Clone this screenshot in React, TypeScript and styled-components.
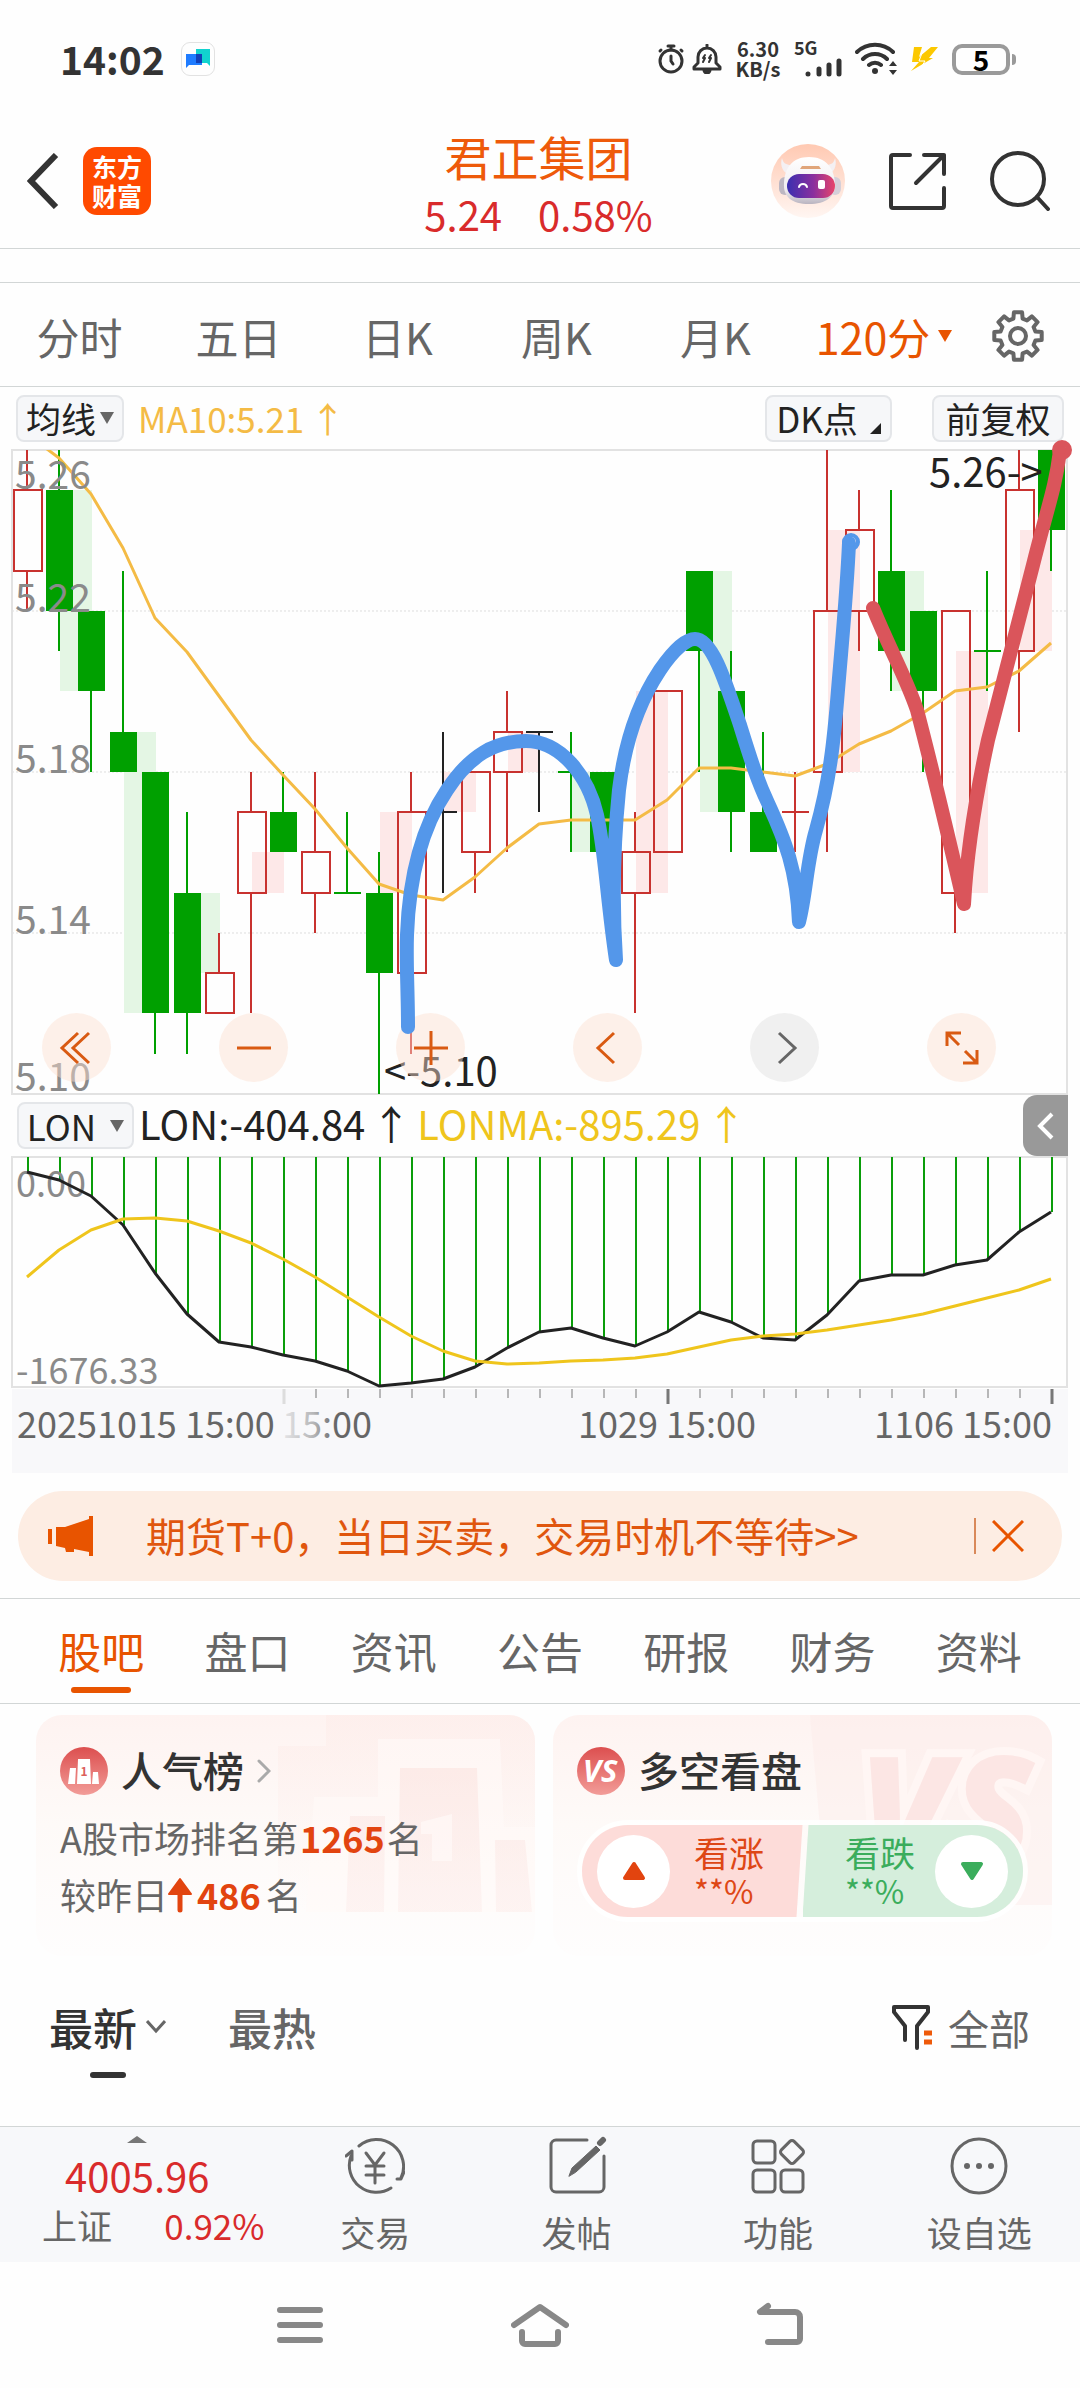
import React from "react";
import styled, { createGlobalStyle, css } from "styled-components";

const FONT = '"Noto Sans CJK SC", "Noto Sans", sans-serif';

const GlobalStyle = createGlobalStyle`
  * { box-sizing: border-box; }
  body { margin: 0; background: #fefefe; font-family: ${FONT}; color: #333; }
  button { margin: 0; padding: 0; border: 0; background: none; color: inherit; font: inherit; cursor: pointer; }
  svg { display: block; }
`;

const C = {
  orange: "#e85400",
  up: "#d92b2b",
  gray: "#666",
  line: "#d2d6d6",
  green: "#00a000",
};

/* ---------- data ---------- */

type Tone = "r" | "g" | "k";
/* open, close, high, low, tone */
type Candle = [number, number, number, number, Tone];

const candles: Candle[] = [
  [5.23, 5.25, 5.27, 5.22, "r"],
  [5.25, 5.22, 5.27, 5.21, "g"],
  [5.22, 5.2, 5.22, 5.18, "g"],
  [5.19, 5.18, 5.23, 5.18, "g"],
  [5.18, 5.12, 5.18, 5.11, "g"],
  [5.15, 5.12, 5.17, 5.11, "g"],
  [5.12, 5.13, 5.14, 5.12, "r"],
  [5.15, 5.17, 5.18, 5.12, "r"],
  [5.17, 5.16, 5.18, 5.16, "g"],
  [5.15, 5.16, 5.18, 5.14, "r"],
  [5.15, 5.15, 5.17, 5.15, "g"],
  [5.15, 5.13, 5.16, 5.1, "g"],
  [5.13, 5.17, 5.18, 5.11, "r"],
  [5.17, 5.17, 5.19, 5.15, "k"],
  [5.16, 5.18, 5.18, 5.15, "r"],
  [5.18, 5.19, 5.2, 5.16, "r"],
  [5.19, 5.19, 5.19, 5.17, "k"],
  [5.18, 5.18, 5.19, 5.16, "g"],
  [5.18, 5.16, 5.18, 5.16, "g"],
  [5.15, 5.16, 5.17, 5.12, "r"],
  [5.16, 5.2, 5.2, 5.16, "r"],
  [5.23, 5.21, 5.23, 5.18, "g"],
  [5.2, 5.17, 5.21, 5.16, "g"],
  [5.17, 5.16, 5.19, 5.16, "g"],
  [5.17, 5.17, 5.18, 5.16, "r"],
  [5.18, 5.22, 5.27, 5.16, "r"],
  [5.22, 5.24, 5.25, 5.21, "r"],
  [5.23, 5.21, 5.25, 5.2, "g"],
  [5.22, 5.2, 5.22, 5.18, "g"],
  [5.15, 5.22, 5.22, 5.14, "r"],
  [5.21, 5.21, 5.23, 5.2, "g"],
  [5.21, 5.25, 5.27, 5.19, "r"],
  [5.26, 5.24, 5.26, 5.23, "g"],
];

/* start index, top price, bottom price, tone */
const shades: [number, number, number, Tone][] = [
  [1, 5.25, 5.2, "g"],
  [3, 5.19, 5.12, "g"],
  [5, 5.15, 5.13, "g"],
  [7, 5.16, 5.15, "r"],
  [11, 5.17, 5.15, "r"],
  [13, 5.18, 5.17, "r"],
  [15, 5.19, 5.18, "r"],
  [17, 5.18, 5.16, "g"],
  [19, 5.2, 5.15, "r"],
  [21, 5.23, 5.17, "g"],
  [25, 5.24, 5.18, "r"],
  [27, 5.23, 5.2, "g"],
  [29, 5.21, 5.15, "r"],
  [31, 5.24, 5.21, "r"],
];

const ma10 = [
  -15, 9, 45, 99, 169, 203, 247, 291, 326, 360, 399, 435, 446, 451, 428, 399,
  375, 371, 371, 371, 351, 319, 319, 323, 327, 315, 295, 282, 264, 242, 238,
  222, 194,
];

const lon = [
  16, 24, 40, 69, 117, 158, 186, 191, 199, 205, 215, 230, 227, 223, 211, 192,
  176, 172, 182, 190, 176, 156, 166, 182, 184, 159, 125, 119, 119, 109, 104,
  76, 56,
];
const lonma = [
  121, 94, 74, 63, 62, 65, 75, 87, 103, 121, 141, 161, 180, 195, 205, 208,
  207, 205, 204, 202, 198, 191, 184, 180, 178, 174, 169, 164, 158, 150, 142,
  134, 123,
];

const px = (i: number) => 15 + 32 * i;
const py = (p: number) => Math.round(1 + (5.26 - p) * 4025);
const points = (ys: number[]) => ys.map((y, i) => `${px(i)},${y}`).join(" ");

const toneColor = { r: "#c8322f", g: C.green, k: "#222" };

/* ---------- status bar ---------- */

const Page = styled.div`
  width: 100%;
  display: flex;
  flex-direction: column;
  background: #fefefe;
`;

const Status = styled.div`
  height: 118px;
  padding: 0 64px 0 60px;
  display: flex;
  align-items: center;
  justify-content: space-between;
`;
const Group = styled.div<{ $gap: number }>`
  display: flex;
  align-items: center;
  gap: ${(p) => p.$gap}px;
`;
const Clock = styled.span`
  font-size: 39px;
  line-height: 44px;
  padding-bottom: 3px;
  font-weight: 700;
`;
const Speed = styled.span`
  width: 46px;
  font-size: 20px;
  line-height: 20px;
  font-weight: 700;
  text-align: center;
`;
const Signal = styled.svg`
  overflow: visible;
`;
const AppBadge = styled.span`
  width: 34px;
  height: 34px;
  border: 1px solid #e2e2e2;
  border-radius: 9px;
  display: grid;
  place-items: center;
`;
const Battery = styled.span`
  position: relative;
  width: 58px;
  height: 31px;
  margin-right: 6px;
  border: 4px solid #9a9a9a;
  border-radius: 10px;
  font-size: 28px;
  line-height: 22px;
  font-weight: 700;
  text-align: center;
  color: #000;
  &::after {
    content: "";
    position: absolute;
    right: -10px;
    top: 6px;
    width: 4px;
    height: 11px;
    border-radius: 0 4px 4px 0;
    background: #9a9a9a;
  }
`;

function StatusBar() {
  return (
    <Status>
      <Group $gap={16}>
        <Clock>14:02</Clock>
        <AppBadge>
          <svg width="26" height="22" viewBox="0 0 26 22">
            <path d="M11 1h14v17l-3-3H11z" fill="#11d3cf" />
            <path d="M1 6h16v11H4l-3 3z" fill="#1f7cff" />
            <path d="M11 6h6v9h-6z" fill="#1140b8" />
          </svg>
        </AppBadge>
      </Group>
      <Group $gap={13}>
        <Group $gap={7}>
          <svg width="28" height="30" viewBox="0 0 28 30" fill="none" stroke="#333" strokeWidth="3" strokeLinecap="round">
            <circle cx="14" cy="17" r="11" />
            <path d="M11 2h6M14 2v4M4 6l-1 1M24 6l1 1M14 12v5l2 3" />
          </svg>
          <svg width="30" height="30" viewBox="0 0 30 30" fill="none" stroke="#333" strokeWidth="3" strokeLinecap="round" strokeLinejoin="round">
            <path d="M15 1v2M6 13a9 9 0 0 1 18 0v6l4 4v2H2v-2l4-4z" />
            <path d="M12 26a3 3 0 0 0 6 0z" fill="#333" />
            <path d="M13 11l-2 3h2l-2 4M19 11l-2 3h2l-2 4" strokeWidth="2" />
          </svg>
        </Group>
        <Speed>6.30 KB/s</Speed>
        <Signal width="48" height="36" viewBox="0 0 48 36">
          <text x="0" y="14" fontSize="18" fontWeight="700" fill="#333">5G</text>
          <path d="M14 33v0M25 33v-5M35 33v-9M45 33v-13" stroke="#333" strokeWidth="5" strokeLinecap="round" />
        </Signal>
        <svg width="42" height="34" viewBox="0 0 42 34" fill="none" stroke="#333" strokeWidth="4" strokeLinecap="round">
          <path d="M2 10a26 26 0 0 1 36 0M8 17a17 17 0 0 1 24 0M14 23a9 9 0 0 1 12 0" />
          <circle cx="20" cy="29" r="3" fill="#333" stroke="none" />
          <path d="M38 19l4 5h-8zM38 33l4-5h-8z" fill="#333" stroke="none" />
        </svg>
        <svg width="29" height="26" viewBox="0 0 29 26">
          <path d="M4 1h8l-3 10 12-10h7l-9 11h4L1 25l8-9H2z" fill="#fcc800" />
          <path d="M14 2l-5 13h6l-3 5" fill="none" stroke="#fff" strokeWidth="1" />
        </svg>
        <Battery>5</Battery>
      </Group>
    </Status>
  );
}

/* ---------- header ---------- */

const Head = styled.header`
  height: 131px;
  padding: 0 30px 4px 27px;
  display: grid;
  grid-template-columns: 1fr auto 1fr;
  align-items: center;
  border-bottom: 1px solid ${C.line};
`;
const HeadRight = styled.div`
  display: flex;
  justify-content: flex-end;
  align-items: center;
  gap: 42px;
`;
const Logo = styled.button`
  width: 68px;
  height: 68px;
  border-radius: 14px;
  background: #ff4a00;
  color: #fff;
  font-size: 25px;
  line-height: 29px;
  font-weight: 700;
`;
const TitleBox = styled.div`
  padding-top: 6px;
  text-align: center;
`;
const Title = styled.h1`
  margin: 0;
  font-size: 47px;
  line-height: 60px;
  font-weight: 400;
  color: #ee5a0a;
`;
const Quote = styled.div`
  display: flex;
  justify-content: center;
  gap: 36px;
  font-size: 40px;
  line-height: 56px;
  color: ${C.up};
`;
const Strip = styled.div`
  height: 34px;
  border-bottom: 1px solid ${C.line};
`;

function Header() {
  return (
    <Head>
      <Group $gap={24}>
        <button aria-label="返回">
          <svg width="32" height="56" viewBox="0 0 32 56" fill="none" stroke="#333" strokeWidth="6">
            <path d="M29 2L4 28l25 26" />
          </svg>
        </button>
        <Logo>东方<br />财富</Logo>
      </Group>
      <TitleBox>
        <Title>君正集团</Title>
        <Quote>
          <span>5.24</span>
          <span>0.58%</span>
        </Quote>
      </TitleBox>
      <HeadRight>
        <button aria-label="助手">
          <svg width="75" height="75" viewBox="0 0 75 75">
            <defs>
              <linearGradient id="halo" x1="0" y1="0" x2="0" y2="1">
                <stop offset="0" stopColor="#ffc9b2" />
                <stop offset="1" stopColor="#fff6f2" />
              </linearGradient>
              <linearGradient id="visor" x1="0" y1="0" x2="1" y2="0">
                <stop offset="0" stopColor="#3a2fb0" />
                <stop offset="0.55" stopColor="#8a2f9e" />
                <stop offset="1" stopColor="#e8456a" />
              </linearGradient>
              <linearGradient id="shell" x1="0" y1="0" x2="0" y2="1">
                <stop offset="0" stopColor="#fff" />
                <stop offset="0.7" stopColor="#f0edf0" />
                <stop offset="1" stopColor="#b9b4c0" />
              </linearGradient>
            </defs>
            <circle cx="37" cy="37" r="37" fill="url(#halo)" />
            <path d="M11 14c1 5 4 7 9 7l-5 8c-4-3-6-9-4-15zM64 14c-1 5-4 7-9 7l5 8c4-3 6-9 4-15z" fill="#f4f0f3" />
            <rect x="8" y="33" width="12" height="18" rx="6" fill="#bdb7c2" />
            <rect x="58" y="33" width="12" height="18" rx="6" fill="#d5cfd8" />
            <path d="M38 13c17 0 25 11 26 26 1 14-9 21-26 21s-26-7-25-21c1-15 8-26 25-26z" fill="url(#shell)" />
            <rect x="16" y="30" width="48" height="24" rx="12" fill="url(#visor)" />
            <path d="M28 43c1-4 7-4 8 0" fill="none" stroke="#fff" strokeWidth="2" strokeLinecap="round" />
            <rect x="47" y="36" width="7" height="9" rx="2" fill="#fff" />
            <path d="M31 22h17l2 3H29z" fill="#e0a57a" />
          </svg>
        </button>
        <button aria-label="分享">
          <svg width="60" height="60" viewBox="0 0 60 60" fill="none" stroke="#333" strokeWidth="4" strokeLinecap="round" strokeLinejoin="round">
            <path d="M22 4H5a2 2 0 0 0-2 2v49a2 2 0 0 0 2 2h49a2 2 0 0 0 2-2V37" />
            <path d="M36 4h20v19M56 4L28 32" />
          </svg>
        </button>
        <button aria-label="搜索">
          <svg width="60" height="60" viewBox="0 0 60 60" fill="none" stroke="#333" strokeWidth="4" strokeLinecap="round">
            <circle cx="28" cy="28" r="26" />
            <path d="M47 46l11 12" />
          </svg>
        </button>
      </HeadRight>
    </Head>
  );
}

/* ---------- period tabs ---------- */

const Periods = styled.nav`
  height: 104px;
  padding: 2px 17px 0 0;
  display: grid;
  grid-template-columns: repeat(5, 159fr) 178fr 90fr;
  align-items: center;
  border-bottom: 1px solid ${C.line};
`;
const Period = styled.button<{ $on?: boolean }>`
  display: flex;
  align-items: center;
  justify-content: center;
  gap: 8px;
  font-size: 43px;
  line-height: 60px;
  color: ${(p) => (p.$on ? C.orange : C.gray)};
`;

function gearPath() {
  const pts: string[] = [];
  for (let k = 0; k < 8; k++) {
    const a = (k * Math.PI) / 4 - Math.PI / 2;
    [[-0.26, 18], [-0.17, 24], [0.17, 24], [0.26, 18]].forEach(([d, r]) => {
      pts.push(`${(26 + r * Math.cos(a + d)).toFixed(1)} ${(26 + r * Math.sin(a + d)).toFixed(1)}`);
    });
  }
  return `M${pts.join("L")}Z`;
}

/* ---------- charts ---------- */

const Tools = styled.div`
  height: 62px;
  padding: 0 16px;
  display: flex;
  align-items: center;
  justify-content: space-between;
`;
const Chip = styled.button<{ $w: number }>`
  width: ${(p) => p.$w}px;
  height: 47px;
  display: flex;
  align-items: center;
  justify-content: center;
  gap: 4px;
  border: 2px solid #e4e6e9;
  border-radius: 8px;
  background: #f6f7f9;
  color: #222;
  font-size: 35px;
  line-height: 42px;
`;
const Reading = styled.span<{ $c: string; $big?: boolean }>`
  display: flex;
  gap: 6px;
  color: ${(p) => p.$c};
  font-size: ${(p) => (p.$big ? 40 : 35)}px;
  line-height: 44px;
`;
const Corner = styled.svg`
  align-self: flex-end;
  margin: 0 0 6px 8px;
`;
const LonRow = styled.div`
  height: 61px;
  padding: 0 12px 0 17px;
  display: flex;
  align-items: center;
  gap: 5px;
`;
const Readings = styled.div`
  flex: 1;
  padding-bottom: 5px;
  display: flex;
  gap: 6px;
`;
const Drawer = styled.button`
  width: 45px;
  height: 61px;
  display: grid;
  place-items: center;
  border-radius: 14px 0 0 14px;
  background: #999;
`;
const Plot = styled.div`
  position: relative;
  margin: 0 12px;
`;
const PlotSvg = styled.svg`
  width: 100%;
  height: auto;
  overflow: visible;
  font-family: ${FONT};
`;
const Marks = styled.svg`
  position: absolute;
  inset: 0;
  width: 100%;
  height: 100%;
  overflow: visible;
  pointer-events: none;
`;
const Controls = styled.div`
  position: absolute;
  left: 30px;
  right: 72px;
  bottom: 13px;
  display: flex;
  justify-content: space-between;
`;
const Round = styled.button<{ $muted?: boolean }>`
  width: 69px;
  height: 69px;
  display: grid;
  place-items: center;
  border-radius: 50%;
  background: ${(p) => (p.$muted ? "rgba(225,225,225,.45)" : "rgba(253,224,208,.45)")};
  color: ${(p) => (p.$muted ? "#666" : "#d95a12")};
`;

const controls: { name: string; d: string; muted?: boolean }[] = [
  { name: "最早", d: "M19 3L3 18l16 15M30 3L14 18l16 15" },
  { name: "缩小", d: "M1 18h34" },
  { name: "放大", d: "M1 18h34M18 1v34" },
  { name: "左移", d: "M24 3L8 18l16 15" },
  { name: "右移", d: "M12 3l16 15-16 15", muted: true },
  { name: "全屏", d: "M17 3H3v13M3 3l12 12M33 20v13H19M33 33L21 21" },
];

function CandleMark({ c, i }: { c: Candle; i: number }) {
  const [open, close, high, low, tone] = c;
  const x = px(i);
  const top = py(Math.max(open, close));
  const bottom = py(Math.min(open, close));
  const color = toneColor[tone];
  return (
    <g stroke={color} strokeWidth="2">
      {top > py(high) && <path d={`M${x} ${py(high)}V${top}`} />}
      {py(low) > bottom && <path d={`M${x} ${bottom}V${py(low)}`} />}
      {top === bottom ? (
        <path d={`M${x - 13} ${top}h27`} />
      ) : tone === "r" ? (
        <rect x={x - 13} y={top} width="28" height={bottom - top} fill="none" />
      ) : (
        <rect x={x - 13} y={top} width="27" height={bottom - top} fill={color} stroke="none" />
      )}
    </g>
  );
}

function PriceChart() {
  return (
    <Plot>
      <PlotSvg viewBox="0 0 1056 646" role="img" aria-label="120分K线图">
        <defs>
          <clipPath id="plot"><rect x="0" y="1" width="1056" height="645" /></clipPath>
        </defs>
        {[5.22, 5.18, 5.14].map((p) => (
          <path key={p} d={`M0 ${py(p)}H1055`} stroke="#ddd" strokeDasharray="2 2" />
        ))}
        <path d="M0 1H1055V645H0Z" fill="none" stroke="#e2e2e2" strokeWidth="2" />
        <g clipPath="url(#plot)">
          {shades.map(([i, a, b, t]) => (
            <rect key={i} x={px(i) + 1} y={py(a)} width="32" height={py(b) - py(a)} fill={t === "g" ? "#e4f6e4" : "#fde8e8"} />
          ))}
          {candles.map((c, i) => <CandleMark key={i} c={c} i={i} />)}
          <polyline points={points(ma10)} fill="none" stroke="#f4bb45" strokeWidth="3" strokeLinejoin="round" />
        </g>
        <g fontSize="39" fill="#8a8a8a">
          <text x="3" y="40">5.26</text>
          <text x="3" y="163">5.22</text>
          <text x="3" y="324">5.18</text>
          <text x="3" y="485">5.14</text>
          <text x="3" y="642">5.10</text>
        </g>
        <g fontSize="40" fill="#222">
          <text x="917" y="38">{"5.26->"}</text>
          <text x="372" y="637">{"<-5.10"}</text>
        </g>
      </PlotSvg>
      <Controls>
        {controls.map((c) => (
          <Round key={c.name} $muted={c.muted} aria-label={c.name}>
            <svg width="36" height="36" viewBox="0 0 36 36" fill="none" stroke="currentColor" strokeWidth="3">
              <path d={c.d} />
            </svg>
          </Round>
        ))}
      </Controls>
      <Marks viewBox="0 0 1056 646" fill="none" strokeWidth="14" strokeLinecap="round" strokeLinejoin="round">
        <g transform="translate(-12 -449)">
          <path
            stroke="#5497ea"
            d="M408 1027C408 990 406 965 407 935C409 880 420 830 447 790C470 755 495 741 526 741C560 741 588 775 597 815C605 850 607 900 616 960C612 900 614 840 619 790C625 740 640 700 660 670C675 648 687 639 695 639C712 639 725 680 740 725C750 757 757 780 768 803C785 840 797 870 799 922C806 895 807 860 816 830C830 780 834 740 838 690C843 630 847 590 849 543"
          />
          <circle cx="851" cy="542" r="2" stroke="#5497ea" />
          <path
            stroke="#da555b"
            d="M873 608C890 650 905 675 917 710C930 760 940 800 964 904C967 850 975 800 988 740C1003 680 1018 625 1033 565C1048 505 1055 490 1060 451"
          />
          <circle cx="1062" cy="450" r="3" stroke="#da555b" />
        </g>
      </Marks>
    </Plot>
  );
}

function LonChart() {
  return (
    <Plot>
      <PlotSvg viewBox="0 0 1056 318" role="img" aria-label="LON指标图">
        <defs>
          <linearGradient id="fade" x1="0" y1="0" x2="1" y2="0">
            <stop offset="0" stopColor="#666" stopOpacity="0.12" />
            <stop offset="0.35" stopColor="#666" stopOpacity="0.45" />
            <stop offset="0.6" stopColor="#666" />
          </linearGradient>
        </defs>
        <rect x="0" y="233" width="1056" height="84" fill="#f8f8fa" />
        <path d="M0 1H1055V231H0Z" fill="none" stroke="#e2e2e2" strokeWidth="2" />
        {lon.map((y, i) => (
          <path key={i} d={`M${px(i) + 1} 1V${y}`} stroke="#0a9d0a" strokeWidth="2" />
        ))}
        <g fontSize="36" fill="#8a8a8a">
          <text x="4" y="41">0.00</text>
          <text x="4" y="228">-1676.33</text>
        </g>
        <polyline points={points(lon)} fill="none" stroke="#222" strokeWidth="3" strokeLinejoin="round" />
        <polyline points={points(lonma)} fill="none" stroke="#efc51c" strokeWidth="3" strokeLinejoin="round" />
        {lon.map((_, i) => {
          if (i < 8) return null;
          const major = (i - 8) % 12 === 0;
          return (
            <path
              key={i}
              d={`M${px(i) + 1} 233v${major ? 15 : 9}`}
              stroke={i === 8 ? "#ddd" : "#777"}
              strokeWidth={major ? 3 : 1}
            />
          );
        })}
        <g fontSize="36" fill="#666">
          <text x="5" y="282">20251015 15:00</text>
          <text x="270" y="282" fill="url(#fade)">15:00</text>
          <text x="655" y="282" textAnchor="middle">1029 15:00</text>
          <text x="1040" y="282" textAnchor="end">1106 15:00</text>
        </g>
      </PlotSvg>
    </Plot>
  );
}

/* ---------- promo ---------- */

const Promo = styled.aside`
  height: 90px;
  margin: 17px 18px;
  padding: 0 38px 0 29px;
  display: flex;
  align-items: center;
  border-radius: 45px;
  background: #fdede3;
  color: #e0560e;
`;
const PromoLink = styled.a`
  flex: 1;
  margin-left: 52px;
  padding-bottom: 2px;
  color: inherit;
  text-decoration: none;
  font-size: 40px;
  line-height: 56px;
`;
const Close = styled.button`
  height: 36px;
  padding-left: 16px;
  display: flex;
  align-items: center;
  border-left: 2px solid #d9895a;
`;

/* ---------- content tabs ---------- */

const Sections = styled.nav`
  height: 106px;
  padding: 0 28px;
  display: grid;
  grid-template-columns: repeat(7, 1fr);
  border-top: 1px solid ${C.line};
  border-bottom: 1px solid ${C.line};
`;
const Section = styled.button<{ $on?: boolean }>`
  display: flex;
  flex-direction: column;
  align-items: center;
  padding-top: 21px;
  font-size: 43px;
  line-height: 60px;
  color: ${(p) => (p.$on ? C.orange : C.gray)};
  ${(p) =>
    p.$on &&
    css`
      &::after {
        content: "";
        width: 60px;
        height: 6px;
        margin-top: 7px;
        border-radius: 3px;
        background: ${C.orange};
      }
    `}
`;

/* ---------- cards ---------- */

const Cards = styled.div`
  padding: 11px 28px 0 36px;
  display: grid;
  grid-template-columns: 1fr 1fr;
  gap: 18px;
`;
const Card = styled.section`
  position: relative;
  height: 241px;
  padding: 30px 24px 0;
  overflow: hidden;
  border-radius: 26px;
  background: linear-gradient(#fef3f1, #fefaf8 45%, #fefdfd);
`;
const Deco = styled.svg`
  position: absolute;
  top: 0;
  right: 0;
`;
const CardBody = styled.div`
  position: relative;
`;
const CardTitle = styled.h2`
  margin: 0;
  display: flex;
  align-items: center;
  gap: 13px;
  font-size: 41px;
  line-height: 48px;
  font-weight: 500;
  color: #333;
`;
const TitleText = styled.span`
  padding-bottom: 3px;
`;
const Lines = styled.div`
  margin-top: 13px;
  font-size: 36px;
  line-height: 57px;
  color: ${C.gray};
`;
const Line = styled.div`
  display: flex;
  align-items: center;
`;
const Hot = styled.strong<{ $gap?: number }>`
  margin: 0 ${(p) => p.$gap ?? 2}px;
  font-weight: 700;
  color: #e2440f;
`;
const Vote = styled.div`
  margin-top: 24px;
  display: grid;
  grid-template-columns: 1fr 1fr;
  border: 5px solid rgba(255, 255, 255, 0.85);
  border-radius: 51px;
  overflow: hidden;
`;
const Side = styled.button<{ $down?: boolean }>`
  height: 92px;
  padding: 0 15px;
  display: flex;
  align-items: center;
  justify-content: ${(p) => (p.$down ? "flex-end" : "flex-start")};
  gap: ${(p) => (p.$down ? 20 : 24)}px;
  text-align: left;
  font-size: 35px;
  line-height: 37px;
  color: ${(p) => (p.$down ? "#3bad5c" : "#de4716")};
  background: ${(p) => (p.$down ? "#d5eedc" : "#fddcd9")};
  clip-path: ${(p) =>
    p.$down
      ? "polygon(6px 0, 100% 0, 100% 100%, 0 100%)"
      : "polygon(0 0, 100% 0, calc(100% - 6px) 100%, 0 100%)"};
`;
const Knob = styled.span`
  width: 73px;
  height: 73px;
  display: grid;
  place-items: center;
  border-radius: 50%;
  background: #fff;
`;
const Pct = styled.span`
  font-size: 32px;
`;

function BadgeIcon({ kind }: { kind: "rank" | "vs" }) {
  return (
    <svg width="48" height="48" viewBox="0 0 48 48">
      <defs>
        <linearGradient id={`badge-${kind}`} x1="0" y1="0" x2="0" y2="1">
          <stop offset="0" stopColor="#dc4f4f" />
          <stop offset="1" stopColor="#f29c98" />
        </linearGradient>
      </defs>
      <circle cx="24" cy="24" r="24" fill={`url(#badge-${kind})`} />
      {kind === "rank" ? (
        <>
          <path d="M18 12h12l1 25H17zM10 21h6l-1 16H8zM33 25h5l1 12h-7z" fill="#fff" />
          <text x="24" y="29" fontSize="12" fontWeight="700" textAnchor="middle" fill="#dc5f5c">1</text>
        </>
      ) : (
        <text x="23" y="35" fontSize="31" fontWeight="700" fontStyle="italic" fontFamily='"Open Sans", sans-serif' textAnchor="middle" fill="#fff">VS</text>
      )}
    </svg>
  );
}

/* ---------- feed filter ---------- */

const Filter = styled.div`
  height: 170px;
  padding: 41px 50px 0 49px;
  display: flex;
  align-items: flex-start;
  justify-content: space-between;
`;
const SortWrap = styled.div`
  align-self: flex-start;
`;
const Sort = styled.button<{ $on?: boolean }>`
  display: flex;
  flex-direction: column;
  align-items: center;
  font-size: 44px;
  line-height: 60px;
  font-weight: 500;
  color: ${(p) => (p.$on ? "#333" : C.gray)};
  ${(p) =>
    p.$on &&
    css`
      &::after {
        content: "";
        width: 36px;
        height: 6px;
        margin-top: 15px;
        border-radius: 3px;
        background: #333;
      }
    `}
`;
const All = styled.button`
  display: flex;
  align-items: center;
  gap: 14px;
  font-size: 41px;
  line-height: 60px;
  color: ${C.gray};
`;

/* ---------- bottom ---------- */

const Bottom = styled.nav`
  height: 136px;
  display: grid;
  grid-template-columns: 274fr repeat(4, 201fr);
  border-top: 1px solid ${C.line};
  background: #f7f8fa;
  color: ${C.gray};
`;
const IndexBox = styled.button`
  display: flex;
  flex-direction: column;
  align-items: center;
  padding-top: 9px;
  color: ${C.up};
`;
const IndexValue = styled.span`
  font-size: 40px;
  line-height: 50px;
  margin-top: 7px;
`;
const IndexRow = styled.span`
  width: 100%;
  padding: 0 10px 0 42px;
  display: flex;
  justify-content: space-between;
  font-size: 35px;
  line-height: 50px;
`;
const IndexName = styled.span`
  color: ${C.gray};
`;
const Action = styled.button`
  display: flex;
  flex-direction: column;
  align-items: center;
  gap: 12px;
  padding-top: 9px;
  font-size: 35px;
  line-height: 48px;
`;
const SysNav = styled.div`
  height: 126px;
  padding: 0 276px;
  display: flex;
  align-items: center;
  justify-content: space-between;
`;

const IconSvg = ({ children }: { children: React.ReactNode }) => (
  <svg width="60" height="60" viewBox="0 0 60 60" fill="none" stroke="#666" strokeWidth="3" strokeLinecap="round" strokeLinejoin="round">
    {children}
  </svg>
);

export default function App() {
  return (
    <Page>
      <GlobalStyle />
      <StatusBar />
      <Header />
      <Strip />
      <Periods>
        {["分时", "五日", "日K", "周K", "月K"].map((t) => <Period key={t}>{t}</Period>)}
        <Period $on>
          120分
          <svg width="14" height="12" viewBox="0 0 14 12"><path d="M0 0h14L7 12z" fill={C.orange} /></svg>
        </Period>
        <Period aria-label="设置">
          <svg width="52" height="52" viewBox="0 0 52 52" fill="none" stroke="#666" strokeWidth="4" strokeLinejoin="round">
            <path d={gearPath()} />
            <circle cx="26" cy="26" r="8" />
          </svg>
        </Period>
      </Periods>

      <Tools>
        <Group $gap={14}>
          <Chip $w={108}>
            均线
            <svg width="14" height="12" viewBox="0 0 14 12"><path d="M0 0h14L7 12z" fill="#666" /></svg>
          </Chip>
          <Reading $c="#f4bb45"><span>MA10:5.21</span><span>↑</span></Reading>
        </Group>
        <Group $gap={40}>
          <Chip $w={127}>
            DK点
            <Corner width="11" height="11" viewBox="0 0 11 11"><path d="M11 0v11H0z" fill="#222" /></Corner>
          </Chip>
          <Chip $w={132}>前复权</Chip>
        </Group>
      </Tools>
      <PriceChart />
      <LonRow>
        <Chip $w={117}>
          LON
          <svg width="24" height="12" viewBox="0 0 24 12"><path d="M10 0h14l-7 12z" fill="#666" /></svg>
        </Chip>
        <Readings>
          <Reading $big $c="#222"><span>LON:-404.84</span><span>↑</span></Reading>
          <Reading $big $c="#efc51c"><span>LONMA:-895.29</span><span>↑</span></Reading>
        </Readings>
        <Drawer aria-label="展开">
          <svg width="18" height="28" viewBox="0 0 18 28" fill="none" stroke="#fff" strokeWidth="4"><path d="M15 2L3 14l12 12" /></svg>
        </Drawer>
      </LonRow>
      <LonChart />

      <Promo>
        <svg width="47" height="40" viewBox="0 0 47 40" fill="#e85400">
          <path d="M1 13h4v15H1zM9 11h9L42 3V0h4v40h-4v-4l-15-3v3h-8l-1-4-9-2z" />
        </svg>
        <PromoLink href="#promo">期货T+0，当日买卖，交易时机不等待&gt;&gt;</PromoLink>
        <Close aria-label="关闭">
          <svg width="32" height="32" viewBox="0 0 32 32" stroke="#e85400" strokeWidth="3"><path d="M1 1l30 30M31 1L1 31" /></svg>
        </Close>
      </Promo>

      <Sections>
        {["股吧", "盘口", "资讯", "公告", "研报", "财务", "资料"].map((t, i) => (
          <Section key={t} $on={i === 0}>{t}</Section>
        ))}
      </Sections>

      <Cards>
        <Card>
          <Deco width="257" height="241" viewBox="242 0 257 241">
            <defs>
              <linearGradient id="podium" x1="0" y1="0" x2="0" y2="1">
                <stop offset="0" stopColor="#fbe3df" stopOpacity="0.6" />
                <stop offset="1" stopColor="#fbe6e4" stopOpacity="0.35" />
              </linearGradient>
              <linearGradient id="backdrop" x1="0" y1="0" x2="0" y2="1">
                <stop offset="0" stopColor="#fdebe8" stopOpacity="0.5" />
                <stop offset="1" stopColor="#fdebe8" stopOpacity="0" />
              </linearGradient>
            </defs>
            <path d="M290 0h209v196h-257V31h48z" fill="url(#backdrop)" />
            <path d="M342 24h122l4 88h31v85H270l8-115h64z" fill="#fffaf8" opacity="0.6" />
            <path d="M364 53h77l5 144h-84zM314 101h35l-1 96h-38zM459 125h30l7 72h-36z" fill="url(#podium)" />
            <path d="M385 107l31-8v47h-20v-27h-11z" fill="#fffaf8" opacity="0.7" />
          </Deco>
          <CardBody>
            <CardTitle>
              <BadgeIcon kind="rank" />
              <TitleText>人气榜</TitleText>
              <svg width="14" height="24" viewBox="0 0 14 24" fill="none" stroke="#aaa" strokeWidth="3" strokeLinecap="round"><path d="M2 2l10 10L2 22" /></svg>
            </CardTitle>
            <Lines>
              <Line>A股市场排名第<Hot>1265</Hot>名</Line>
              <Line>
                较昨日
                <svg width="24" height="36" viewBox="0 0 24 36"><path d="M12 2L1 17h22z" fill="#e2440f" stroke="#e2440f" strokeWidth="2" strokeLinejoin="round" /><path d="M12 12v21" stroke="#e2440f" strokeWidth="5" strokeLinecap="round" /></svg>
                <Hot $gap={5}>486</Hot>名
              </Line>
            </Lines>
          </CardBody>
        </Card>
        <Card>
          <Deco width="242" height="241" viewBox="257 0 242 241">
            <path d="M257 0h242v190H274z" fill="#fdebe8" opacity="0.45" />
            <text x="306" y="150" fontSize="150" fontWeight="800" fontStyle="italic" fontFamily='"Open Sans", sans-serif' fill="#fce6e4" stroke="#fff6f4" strokeWidth="16" paintOrder="stroke">VS</text>
          </Deco>
          <CardBody>
            <CardTitle>
              <BadgeIcon kind="vs" />
              <TitleText>多空看盘</TitleText>
            </CardTitle>
            <Vote>
              <Side>
                <Knob>
                  <svg width="24" height="20" viewBox="0 0 24 20"><path d="M12 3l9 14H3z" fill="#e2440f" stroke="#e2440f" strokeWidth="4" strokeLinejoin="round" /></svg>
                </Knob>
                <span>看涨<br /><Pct>**%</Pct></span>
              </Side>
              <Side $down>
                <span>看跌<br /><Pct>**%</Pct></span>
                <Knob>
                  <svg width="24" height="20" viewBox="0 0 24 20"><path d="M12 17l9-14H3z" fill="#3bad5c" stroke="#3bad5c" strokeWidth="4" strokeLinejoin="round" /></svg>
                </Knob>
              </Side>
            </Vote>
          </CardBody>
        </Card>
      </Cards>

      <Filter>
        <Group $gap={62}>
          <Sort $on>
            <Group $gap={9}>
              最新
              <svg width="20" height="14" viewBox="0 0 20 14" fill="none" stroke="#666" strokeWidth="3"><path d="M1 1l9 10 9-10" /></svg>
            </Group>
          </Sort>
          <SortWrap><Sort>最热</Sort></SortWrap>
        </Group>
        <All>
          <svg width="43" height="46" viewBox="0 0 43 46" fill="none" strokeLinejoin="round" strokeLinecap="round">
            <path d="M14 36V22L3 8V3h34v5L26 22v22" stroke="#333" strokeWidth="4" />
            <path d="M33 29h8M33 38h8" stroke="#ee5a0a" strokeWidth="5" strokeLinecap="butt" />
          </svg>
          全部
        </All>
      </Filter>

      <Bottom>
        <IndexBox>
          <svg width="20" height="7" viewBox="0 0 20 7"><path d="M10 0l10 7H0z" fill="#777" /></svg>
          <IndexValue>4005.96</IndexValue>
          <IndexRow><IndexName>上证</IndexName><span>0.92%</span></IndexRow>
        </IndexBox>
        <Action>
          <IconSvg>
            <path d="M14 10a27 27 0 0 1 42 32M46 52A27 27 0 0 1 6 20M1 20l6-5 0 9M59 36l-3 7-4 0" />
            <path d="M21 17l9 12 9-12M30 29v18M21 30h18M21 39h18" />
          </IconSvg>
          交易
        </Action>
        <Action>
          <IconSvg>
            <path d="M40 4H9a5 5 0 0 0-5 5v42a5 5 0 0 0 5 5h43a5 5 0 0 0 5-5V20" />
            <path d="M22 40l3-8L49 10l4 4-24 22z" fill="#666" strokeWidth="1" />
            <path d="M53 7l3-3" strokeWidth="6" />
          </IconSvg>
          发帖
        </Action>
        <Action>
          <IconSvg>
            <rect x="5" y="5" width="22" height="22" rx="4" />
            <rect x="5" y="34" width="22" height="22" rx="4" />
            <rect x="33" y="34" width="22" height="22" rx="4" />
            <rect x="35" y="7" width="18" height="18" rx="3" transform="rotate(45 44 16)" />
          </IconSvg>
          功能
        </Action>
        <Action>
          <IconSvg>
            <circle cx="30" cy="30" r="27" />
            <g fill="#666" stroke="none"><circle cx="18" cy="30" r="3" /><circle cx="30" cy="30" r="3" /><circle cx="42" cy="30" r="3" /></g>
          </IconSvg>
          设自选
        </Action>
      </Bottom>
      <SysNav>
        <button aria-label="菜单">
          <svg width="48" height="44" viewBox="0 0 48 44" stroke="#888" strokeWidth="6" strokeLinecap="round"><path d="M4 7h40M4 22h40M4 37h40" /></svg>
        </button>
        <button aria-label="主页">
          <svg width="58" height="48" viewBox="0 0 58 48" fill="none" stroke="#888" strokeWidth="6" strokeLinecap="round" strokeLinejoin="round">
            <path d="M3 24L29 6l26 18M11 31v9a3 3 0 0 0 3 3h30a3 3 0 0 0 3-3v-9" />
          </svg>
        </button>
        <button aria-label="后退">
          <svg width="48" height="48" viewBox="0 0 48 48" fill="none" stroke="#888" strokeWidth="6" strokeLinecap="round" strokeLinejoin="round">
            <path d="M12 5L4 11h35a5 5 0 0 1 5 5v22a3 3 0 0 1-3 3H12" />
          </svg>
        </button>
      </SysNav>
    </Page>
  );
}
